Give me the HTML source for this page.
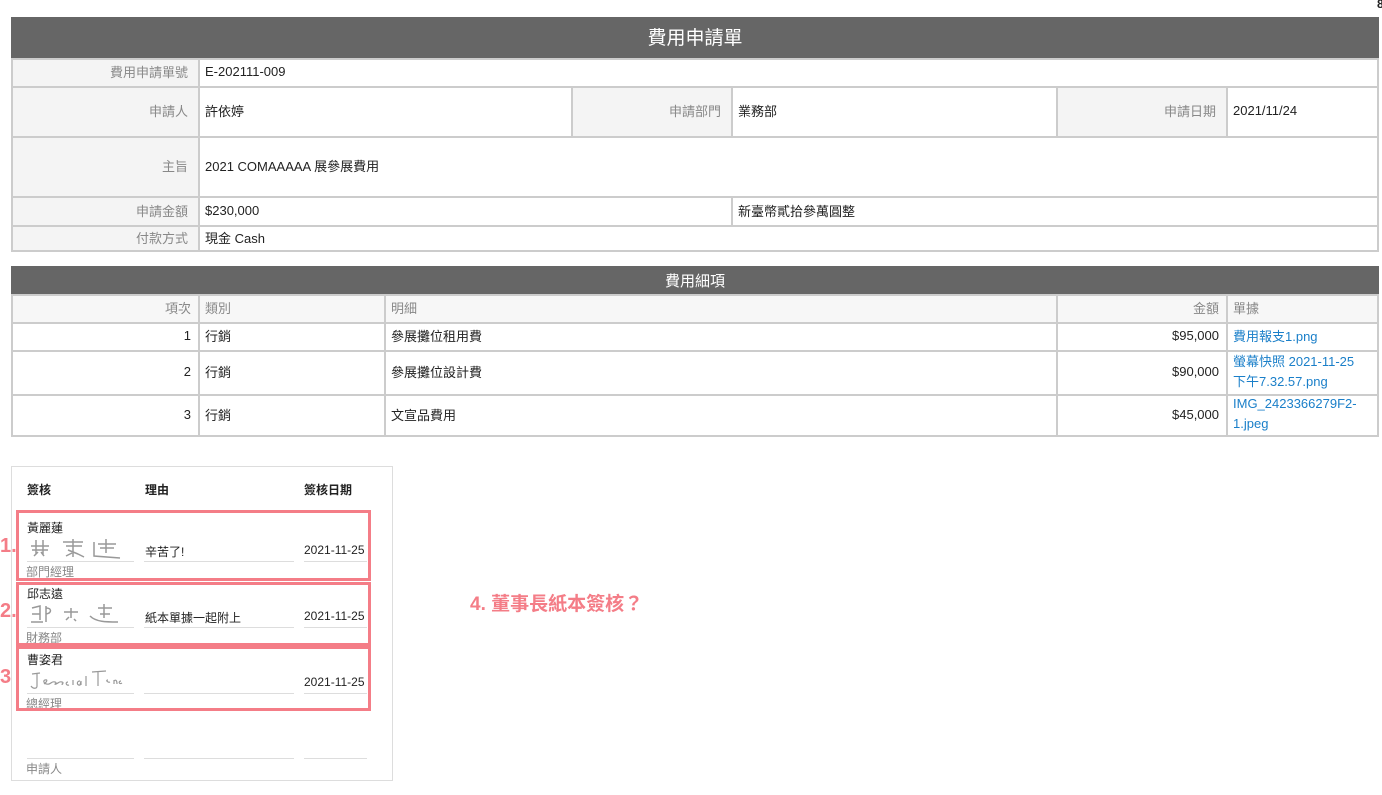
<!DOCTYPE html>
<html><head><meta charset="utf-8"><style>
body{margin:0;width:1382px;height:795px;position:relative;background:#fff;font-family:"Liberation Sans","Noto Sans CJK TC",sans-serif;font-size:13px;color:#222;overflow:hidden}
.c{position:absolute;box-sizing:border-box;border:2px solid #cccccc;display:flex;align-items:center;padding:0 7px 3px 5px;white-space:nowrap}
.l{background:#f4f4f4;color:#888;justify-content:flex-end;padding-right:10px}
.h{background:#f7f7f7;color:#888}
.r{justify-content:flex-end}
.bar{position:absolute;left:11px;width:1368px;background:#666;color:#fff;display:flex;align-items:center;justify-content:center}
a{color:#1a7fc9;text-decoration:none}
.t{position:absolute;white-space:nowrap}
.ln{position:absolute;height:1px;background:#ddd}
.pk{position:absolute;border:3px solid #f47d87;box-sizing:border-box;left:16px;width:355px}
.num{position:absolute;color:#f47d87;font-weight:bold;font-size:20px}
</style></head><body>
<div class="t" style="left:1377px;top:-3px;font-weight:bold;font-size:12px">8</div>
<div class="bar" style="top:17px;height:41px;font-size:19px;padding-bottom:2px;box-sizing:border-box">費用申請單</div>
<div class="c l" style="left:11px;top:58px;width:189px;height:30px">費用申請單號</div>
<div class="c" style="left:198px;top:58px;width:1181px;height:30px">E-202111-009</div>
<div class="c l" style="left:11px;top:86px;width:189px;height:52px">申請人</div>
<div class="c" style="left:198px;top:86px;width:375px;height:52px">許依婷</div>
<div class="c l" style="left:571px;top:86px;width:162px;height:52px">申請部門</div>
<div class="c" style="left:731px;top:86px;width:327px;height:52px">業務部</div>
<div class="c l" style="left:1056px;top:86px;width:172px;height:52px">申請日期</div>
<div class="c" style="left:1226px;top:86px;width:153px;height:52px">2021/11/24</div>
<div class="c l" style="left:11px;top:136px;width:189px;height:62px">主旨</div>
<div class="c" style="left:198px;top:136px;width:1181px;height:62px">2021 COMAAAAA 展參展費用</div>
<div class="c l" style="left:11px;top:196px;width:189px;height:31px">申請金額</div>
<div class="c" style="left:198px;top:196px;width:535px;height:31px">$230,000</div>
<div class="c" style="left:731px;top:196px;width:648px;height:31px">新臺幣貳拾參萬圓整</div>
<div class="c l" style="left:11px;top:225px;width:189px;height:27px">付款方式</div>
<div class="c" style="left:198px;top:225px;width:1181px;height:27px">現金 Cash</div>

<div class="bar" style="top:266px;height:28px;font-size:15px">費用細項</div>
<div class="c h r" style="left:11px;top:294px;width:189px;height:30px">項次</div>
<div class="c h" style="left:198px;top:294px;width:188px;height:30px">類別</div>
<div class="c h" style="left:384px;top:294px;width:674px;height:30px">明細</div>
<div class="c h r" style="left:1056px;top:294px;width:172px;height:30px">金額</div>
<div class="c h" style="left:1226px;top:294px;width:153px;height:30px">單據</div>

<div class="c r" style="left:11px;top:322px;width:189px;height:30px">1</div>
<div class="c" style="left:198px;top:322px;width:188px;height:30px">行銷</div>
<div class="c" style="left:384px;top:322px;width:674px;height:30px">參展攤位租用費</div>
<div class="c r" style="left:1056px;top:322px;width:172px;height:30px">$95,000</div>
<div class="c" style="left:1226px;top:322px;width:153px;height:30px"><a>費用報支1.png</a></div>

<div class="c r" style="left:11px;top:350px;width:189px;height:46px">2</div>
<div class="c" style="left:198px;top:350px;width:188px;height:46px">行銷</div>
<div class="c" style="left:384px;top:350px;width:674px;height:46px">參展攤位設計費</div>
<div class="c r" style="left:1056px;top:350px;width:172px;height:46px">$90,000</div>
<div class="c" style="left:1226px;top:350px;width:153px;height:46px;line-height:20px;white-space:normal"><a>螢幕快照 2021-11-25 下午7.32.57.png</a></div>

<div class="c r" style="left:11px;top:394px;width:189px;height:43px">3</div>
<div class="c" style="left:198px;top:394px;width:188px;height:43px">行銷</div>
<div class="c" style="left:384px;top:394px;width:674px;height:43px">文宣品費用</div>
<div class="c r" style="left:1056px;top:394px;width:172px;height:43px">$45,000</div>
<div class="c" style="left:1226px;top:394px;width:153px;height:43px;line-height:20px;white-space:normal"><a>IMG_2423366279F2-<br>1.jpeg</a></div>

<div style="position:absolute;left:11px;top:466px;width:382px;height:315px;border:1px solid #ddd;box-sizing:border-box"></div>
<div class="t" style="left:27px;top:481px;font-weight:bold;font-size:12px">簽核</div>
<div class="t" style="left:145px;top:481px;font-weight:bold;font-size:12px">理由</div>
<div class="t" style="left:304px;top:481px;font-weight:bold;font-size:12px">簽核日期</div>

<div class="t" style="left:27px;top:519px;font-size:12px">黃麗蓮</div>
<svg style="position:absolute;left:28px;top:536px" width="95" height="25"><g fill="none" stroke="#999" stroke-width="1.5"><path d="M3 10h18M8 4v14M15 4v14M4 14h16M6 20l4-4M16 20l-3-4"/><path d="M35 6h20M38 10h16M40 14l10 4M45 3v18M38 20l6-3M50 18l6 3"/><path d="M70 8h18M78 3v14M72 12h14M66 6v14l26 2"/></g></svg>
<div class="ln" style="left:27px;top:561px;width:107px"></div>
<div class="t" style="left:26px;top:563px;font-size:12px;color:#888">部門經理</div>
<div class="t" style="left:145px;top:543px;font-size:12px">辛苦了!</div>
<div class="ln" style="left:144px;top:561px;width:150px"></div>
<div class="t" style="left:304px;top:543px;font-size:12px">2021-11-25</div>
<div class="ln" style="left:304px;top:561px;width:63px"></div>

<div class="t" style="left:27px;top:585px;font-size:12px">邱志遠</div>
<svg style="position:absolute;left:28px;top:602px" width="95" height="24"><g fill="none" stroke="#999" stroke-width="1.5"><path d="M4 6l8-2v14M4 12h8M3 20h12M18 4v16M18 6c6 0 6 5 0 6"/><path d="M36 10h14M43 6v10M38 18l3-3M46 17l2 2"/><path d="M62 14c6 6 16 6 28 6M70 6h14M76 2v14M72 12h10"/></g></svg>
<div class="ln" style="left:27px;top:627px;width:107px"></div>
<div class="t" style="left:26px;top:629px;font-size:12px;color:#888">財務部</div>
<div class="t" style="left:145px;top:609px;font-size:12px">紙本單據一起附上</div>
<div class="ln" style="left:144px;top:627px;width:150px"></div>
<div class="t" style="left:304px;top:609px;font-size:12px">2021-11-25</div>
<div class="ln" style="left:304px;top:627px;width:63px"></div>

<div class="t" style="left:27px;top:651px;font-size:12px">曹姿君</div>
<svg style="position:absolute;left:28px;top:668px" width="95" height="24"><g fill="none" stroke="#999" stroke-width="1.2"><path d="M4 6l8-1M9 5v13c0 3-4 3-6 0"/><path d="M16 16c3-2 4-5 1-4s0 5 4 4c3-1 3-3 6-2s-2 3 1 2c3-1 3-3 6-2s-2 3 1 2M40 14c-3 0-2 4 1 3M45 12v5M52 13c-4 0-3 5 0 4l1-4v4M58 8v10"/><path d="M64 4l14-1M70 4v14M80 12c-3 0 0 3 2 2M86 12v4M86 13c2-2 3 0 3 3M93 13c-3 0-2 4 1 2"/></g></svg>
<div class="ln" style="left:27px;top:693px;width:107px"></div>
<div class="t" style="left:26px;top:695px;font-size:12px;color:#888">總經理</div>
<div class="ln" style="left:144px;top:693px;width:150px"></div>
<div class="t" style="left:304px;top:675px;font-size:12px">2021-11-25</div>
<div class="ln" style="left:304px;top:693px;width:63px"></div>

<div class="ln" style="left:27px;top:758px;width:107px"></div>
<div class="ln" style="left:144px;top:758px;width:150px"></div>
<div class="ln" style="left:304px;top:758px;width:63px"></div>
<div class="t" style="left:26px;top:760px;font-size:12px;color:#888">申請人</div>

<div class="pk" style="top:510px;height:71px"></div>
<div class="pk" style="top:582px;height:64px"></div>
<div class="pk" style="top:646px;height:65px"></div>
<div class="num" style="left:0;top:535px">1.</div>
<div class="num" style="left:0;top:600px">2.</div>
<div class="num" style="left:0;top:666px">3</div>
<div class="t" style="left:470px;top:589px;color:#f47d87;font-weight:bold;font-size:19px">4. 董事長紙本簽核？</div>
</body></html>
